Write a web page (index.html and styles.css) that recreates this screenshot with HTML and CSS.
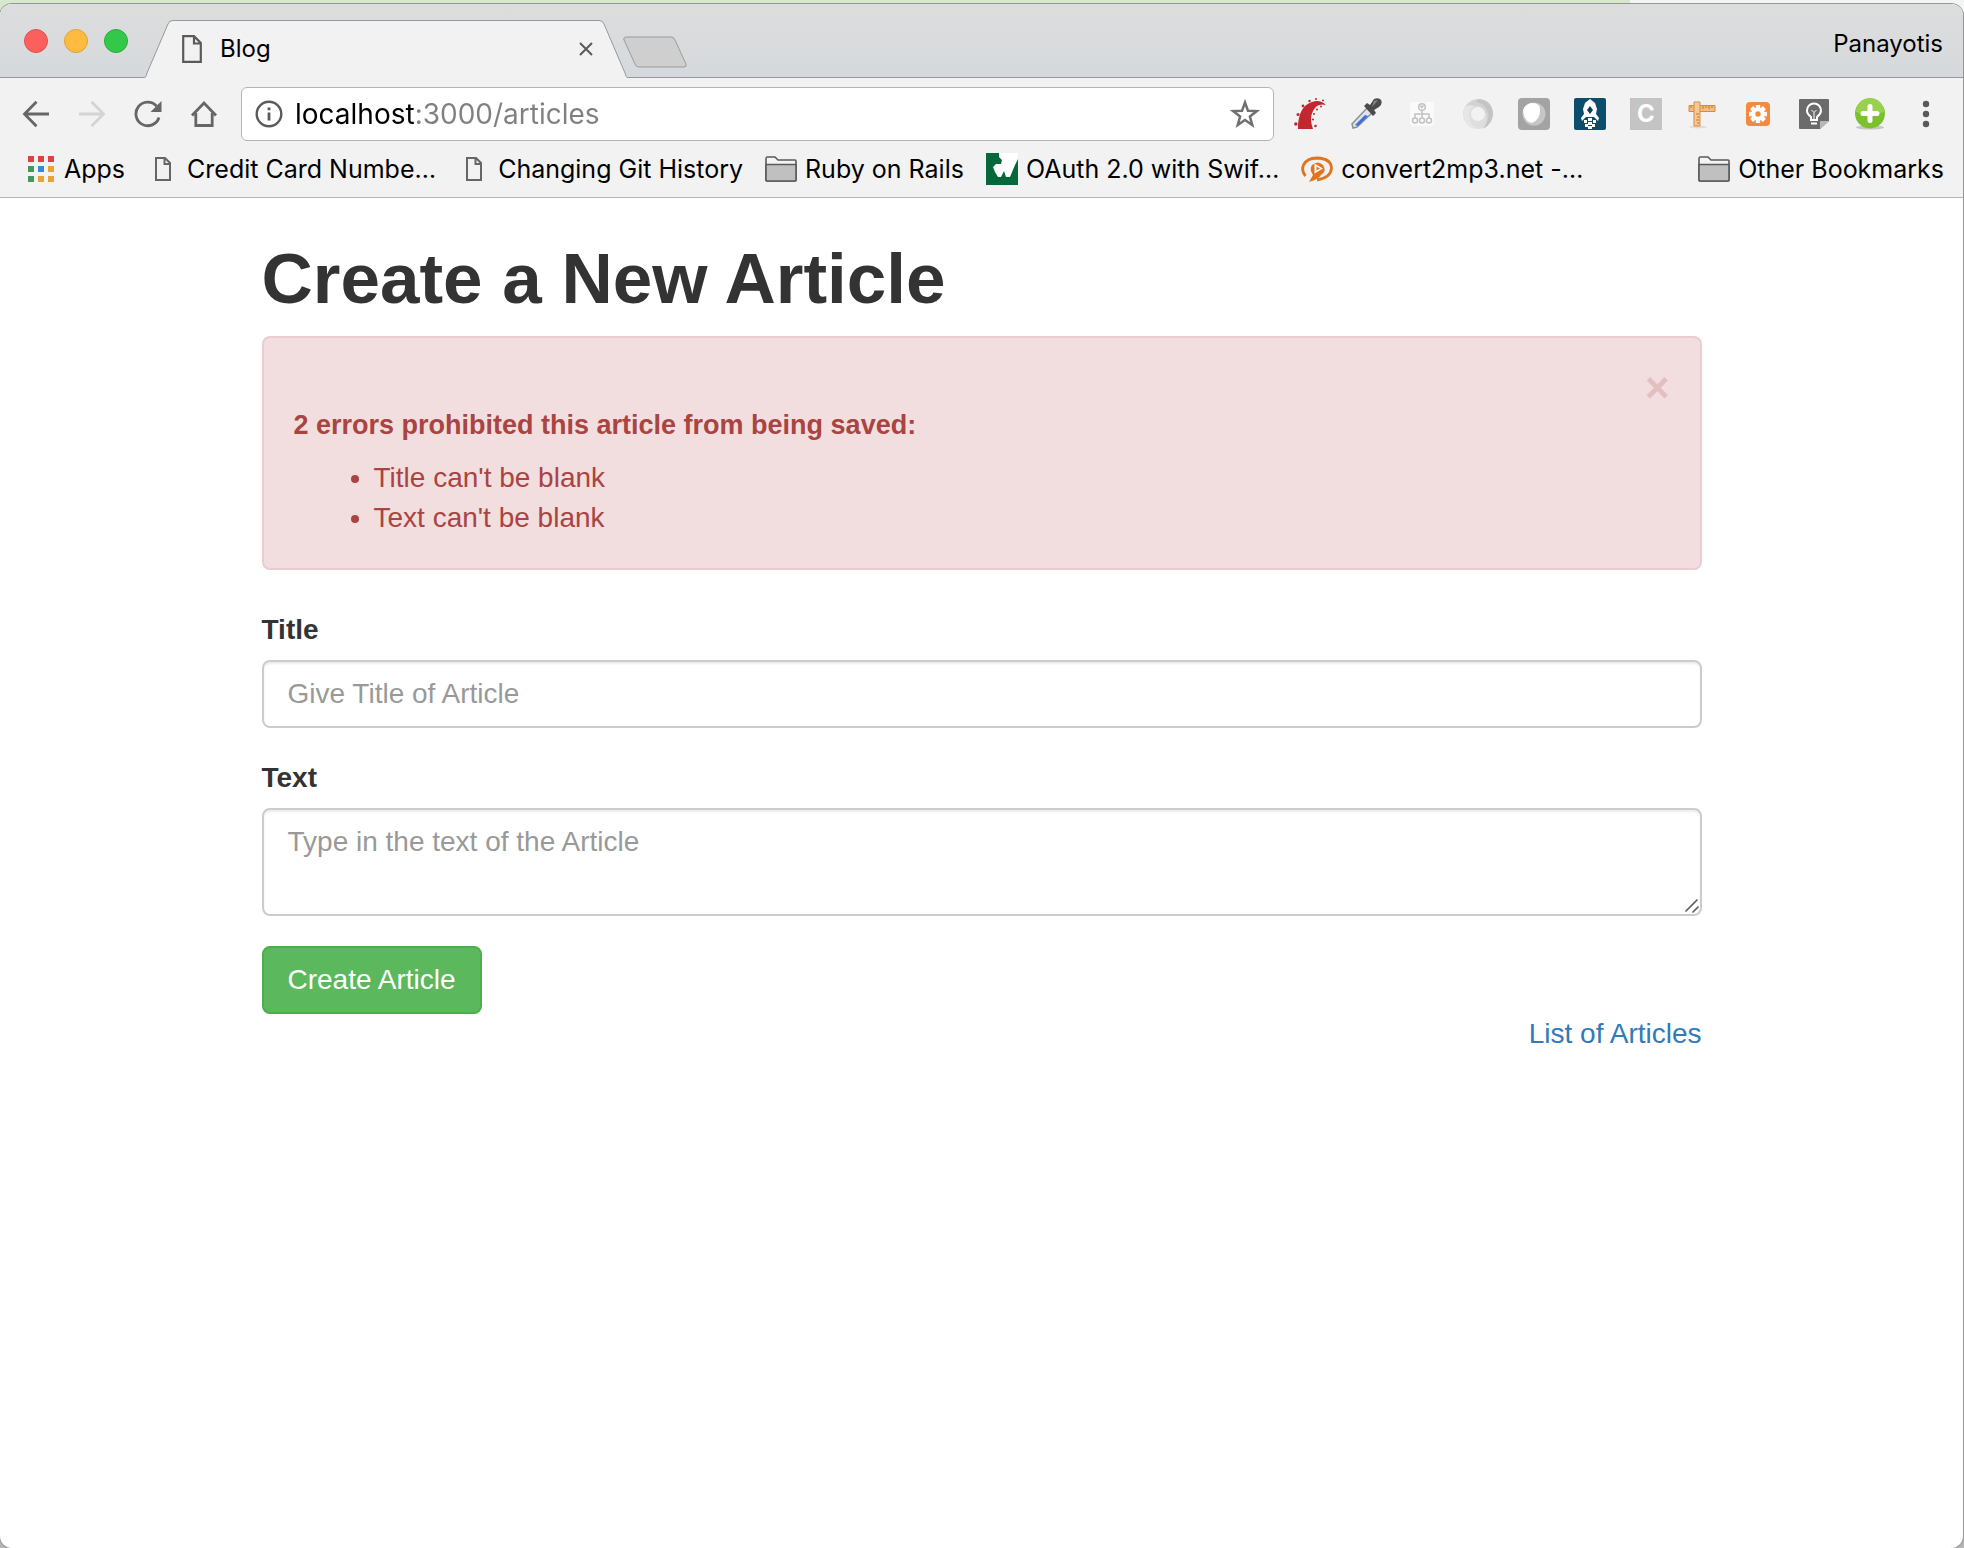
FILE: index.html
```html
<!DOCTYPE html>
<html lang="en">
<head>
<meta charset="utf-8">
<title>Blog</title>
<link rel="stylesheet" href="styles.css">
</head>
<body>
<div class="window">
  <header class="chrome">
    <div class="tabstrip">
      <div class="lights">
        <button class="light light-close" aria-label="Close window"></button>
        <button class="light light-min" aria-label="Minimise window"></button>
        <button class="light light-zoom" aria-label="Zoom window"></button>
      </div>
      <div class="tab">
        <svg class="tab-shape" viewBox="0 0 484 58" preserveAspectRatio="none" aria-hidden="true"><path d="M0 58C2 57 2 56 3 53L24 4Q25 .5 29 .5H455Q459 .5 460 4L481 53C482 56 482 57 484 58" fill="#f2f2f2" stroke="#96989b"/></svg>
        <svg class="tab-icon" viewBox="0 0 20 28" aria-hidden="true"><path d="M1.200 1.200H12L18.800 8V26.800H1.200ZM12 1.200V8.500H18.800" fill="none" stroke="#5a5a5a" stroke-width="2.200"/></svg>
        <span class="tab-title">Blog</span>
        <button class="icon-button" aria-label="Close tab"><svg width="14" height="14" viewBox="0 0 14 14"><path d="M1 1L13 13M13 1L1 13" stroke="#5a5a5a" stroke-width="2"/></svg></button>
      </div>
      <button class="icon-button new-tab" aria-label="New tab"><svg width="66" height="33" viewBox="0 0 66 33"><path d="M5 1H49Q52 1 53 4L64 28Q65 31 62 31H17Q14 31 13 28L2 4Q1 1 5 1Z" fill="#cfcfcf" stroke="#9b9b9b"/></svg></button>
      <button class="icon-button profile">Panayotis</button>
    </div>

    <div class="toolbar">
      <nav class="nav" aria-label="History">
        <button class="icon-button" aria-label="Back"><svg width="28" height="28" viewBox="0 0 28 28"><path d="M27 14H3M14.500 1.800L2.500 14L14.500 26.200" fill="none" stroke="#666" stroke-width="2.800"/></svg></button>
        <button class="icon-button" aria-label="Forward"><svg width="28" height="28" viewBox="0 0 28 28"><path d="M1 14H25M13.500 1.800L25.500 14L13.500 26.200" fill="none" stroke="#d4d4d4" stroke-width="2.800"/></svg></button>
        <button class="icon-button" aria-label="Reload"><svg width="28" height="28" viewBox="0 0 28 28"><path d="M22.500 6A11.800 11.800 0 1 0 25 17.500" fill="none" stroke="#666" stroke-width="2.800"/><path d="M27.500 1V12H16.500Z" fill="#666"/></svg></button>
        <button class="icon-button" aria-label="Home"><svg width="28" height="28" viewBox="0 0 28 28"><path d="M2 15.500L14 3L26 15.500M5.800 13V25.500H22.200V13" fill="none" stroke="#666" stroke-width="2.800"/></svg></button>
      </nav>
      <form class="omnibox">
        <svg width="28" height="28" viewBox="0 0 28 28" aria-hidden="true"><circle cx="14" cy="14" r="12.300" fill="none" stroke="#5a5a5a" stroke-width="2.400"/><path d="M14 12.500V20.500M14 7.500V10.300" stroke="#5a5a5a" stroke-width="2.800"/></svg>
        <input class="url" type="text" aria-label="Address" value="localhost:3000/articles">
        <button class="icon-button" type="button" aria-label="Bookmark this page"><svg width="30" height="30" viewBox="0 0 30 30"><path d="M15 3.500L18 11.800L26.800 12.100L19.900 17.500L22.300 26L15 21L7.700 26L10.100 17.500L3.200 12.100L12 11.800Z" fill="none" stroke="#707070" stroke-width="2.500"/></svg></button>
      </form>
      <div class="extensions">
        <button class="icon-button" aria-label="Rails"><svg width="32" height="32" viewBox="0 0 32 32"><path d="M4 31C4 16 9 4 23 3Q28 3 32 7Q23 5 19 13Q15 20 19 31Z" fill="#c1272d"/><g fill="#c1272d"><circle cx="1.800" cy="26" r="1.700"/><circle cx="4" cy="16.500" r="1.500"/><circle cx="9" cy="8" r="1.400"/><circle cx="15.500" cy="3" r="1.200"/><circle cx="22" cy="1" r="1"/><circle cx="29" cy="2.500" r="1"/><circle cx="27" cy="8.500" r="1"/><circle cx="23" cy="11.500" r="1"/><circle cx="20" cy="16" r="1"/><circle cx="19" cy="21.500" r="1.100"/><circle cx="21.500" cy="28" r="1.300"/></g></svg></button>
        <button class="icon-button" aria-label="Colour picker"><svg width="32" height="32" viewBox="0 0 32 32"><path d="M3 30L2 26L17 10L22 15L7 29Z" fill="#dfe3ea" stroke="#8d9096" stroke-width="1.500"/><path d="M5 27L15 17L18 18L8 28Z" fill="#3d6fe0"/><path d="M14 8L17 5L20 7L24 1Q29-1 31 2Q33 6 29 9L24 12L26 15L23 18Z" fill="#4b4b4b"/><path d="M24 3L28 2L22 9Z" fill="#8a8a8a"/></svg></button>
        <button class="icon-button" aria-label="Site map"><svg width="32" height="32" viewBox="0 0 32 32"><rect x="4" y="4" width="24" height="24" rx="3" fill="#fafafa"/><g fill="none" stroke="#c2c2c2" stroke-width="1.500"><circle cx="16" cy="9" r="3.300"/><path d="M14.500 7.500L16 9.500L17.500 7.500M16 12V20M9 20V16H23V20"/><circle cx="9" cy="22.500" r="2.500"/><circle cx="16" cy="22.500" r="2.500"/><circle cx="23" cy="22.500" r="2.500"/></g></svg></button>
        <button class="icon-button" aria-label="Swirl"><svg width="32" height="32" viewBox="0 0 32 32"><circle cx="16" cy="16" r="11" fill="none" stroke="#dedede" stroke-width="8"/><path d="M15 1Q30 1 31 15Q30 26 21 31Q28 20 22 12Q18 7 10 8Q4 10 1 17Q2 5 15 1Z" fill="#d2d2d2"/><path d="M17 1Q30 3 31 16Q30 26 21 31Q29 21 25 12Q22 5 14 4Z" fill="#c4c4c4"/><path d="M3 9Q-1 18 4 25Q9 31 15 31Q7 26 7 18Q7 11 12 8Q7 6 3 9Z" fill="#e6e6e6"/></svg></button>
        <button class="icon-button" aria-label="Shield"><svg width="32" height="32" viewBox="0 0 32 32"><rect width="32" height="32" rx="4" fill="#a3a3a3"/><circle cx="16" cy="16" r="11.500" fill="#c6c6c6"/><path d="M5 12Q7 6 14 5Q21 5 22 10Q23 21 14 25Q6 24 5 12Z" fill="#fff"/></svg></button>
        <button class="icon-button" aria-label="Rocket"><svg width="32" height="32" viewBox="0 0 32 32"><rect width="32" height="32" rx="2" fill="#0b4d6b"/><path d="M16 1L21 5L23 11L22 16L25 20L24 23L20 19H12L8 23L7 20L10 16L9 11L11 5Z" fill="#fff"/><path d="M16 8L19 12L16 16L13 12Z" fill="#0b3c52"/><path d="M14 20H18V23H14ZM10 22H13V25H10ZM19 22H22V25H19ZM14 24H18V27H14ZM11 26H14V29H11ZM18 26H21V29H18ZM14 28H18V31H14Z" fill="#fff"/></svg></button>
        <button class="icon-button ext-letter" aria-label="Letter C"><b>C</b></button>
        <button class="icon-button" aria-label="Ruler"><svg width="32" height="32" viewBox="0 0 32 32"><ellipse cx="12" cy="29" rx="9" ry="1.500" fill="#dedede"/><path d="M3 7.500H29V13.500H3Z" fill="#f4bd80" stroke="#d58b42"/><path d="M8 4H14V28H8Z" fill="#f8c890" stroke="#d58b42"/><path d="M17 8V11M20 8V10M23 8V11M26 8V10M5 8V10M13 16H10M13 19H11M13 22H10M13 25H11" stroke="#bd7630"/></svg></button>
        <button class="icon-button" aria-label="Settings extension"><svg width="32" height="32" viewBox="0 0 32 32"><rect x="4" y="4" width="24" height="24" rx="4" fill="#f58a3c"/><path d="M16 7V25M7 16H25M9.600 9.600L22.400 22.400M22.400 9.600L9.600 22.400" stroke="#fff" stroke-width="4.400"/><circle cx="16" cy="16" r="6.500" fill="#fff"/><circle cx="16" cy="16" r="2.700" fill="#f58a3c"/></svg></button>
        <button class="icon-button" aria-label="Notes"><svg width="32" height="32" viewBox="0 0 32 32"><path d="M2 1H30Q31 1 31 2V23L22 31H2Q1 31 1 30V2Q1 1 2 1Z" fill="#6b6b6b"/><path d="M22 31V24Q22 23 23 23H31Z" fill="#b8b8b8"/><path d="M13 22V19Q9 16 9 12.500A7 7 0 0 1 23 12.500Q23 16 19 19V22ZM13 25.500H19" fill="none" stroke="#fff" stroke-width="2"/><path d="M13.500 12L16 14.500L18.500 12M16 14.500V21" fill="none" stroke="#fff" stroke-width="1"/></svg></button>
        <button class="icon-button" aria-label="Add"><svg width="32" height="32" viewBox="0 0 32 32"><ellipse cx="16" cy="29.500" rx="14" ry="2" fill="#c4c8c0"/><circle cx="16" cy="15.500" r="15" fill="#7cc02c"/><path d="M2 14A14 14 0 0 1 30 14Q16 19 2 14Z" fill="#98d24c"/><path d="M16 8.500V22.500M9 15.500H23" stroke="#fff" stroke-width="5" stroke-linecap="round"/></svg></button>
        <button class="icon-button" aria-label="Menu"><svg width="32" height="32" viewBox="0 0 32 32"><g fill="#5a5a5a"><circle cx="16" cy="6" r="3.200"/><circle cx="16" cy="16" r="3.200"/><circle cx="16" cy="26" r="3.200"/></g></svg></button>
      </div>
    </div>

    <nav class="bookmarks" aria-label="Bookmarks">
      <a class="bookmark" href="#"><svg width="32" height="32" viewBox="0 0 32 32"><path d="M4 3H10V9H4ZM14 3H20V9H14ZM24 3H30V9H24Z" fill="#dd4343"/><path d="M4 13H10V19H4ZM4 23H10V29H4Z" fill="#43985a"/><path d="M14 13H20V19H14Z" fill="#3a87e0"/><path d="M24 13H30V19H24ZM14 23H20V29H14ZM24 23H30V29H24Z" fill="#e8a33b"/></svg>Apps</a>
      <a class="bookmark" href="#"><svg width="32" height="32" viewBox="0 0 32 32"><path d="M9 5H18L23 10V27H9ZM17.500 5V11H23" fill="none" stroke="#666" stroke-width="2"/></svg>Credit Card Numbe…</a>
      <a class="bookmark" href="#"><svg width="32" height="32" viewBox="0 0 32 32"><path d="M9 5H18L23 10V27H9ZM17.500 5V11H23" fill="none" stroke="#666" stroke-width="2"/></svg>Changing Git History</a>
      <a class="bookmark" href="#"><svg width="32" height="32" viewBox="0 0 32 32"><path d="M1 6Q1 4 2 4H10L13 7H30Q31 7 31 8V27Q31 28 30 28H2Q1 28 1 27Z" fill="#f4f4f4" stroke="#5a5a5a" stroke-width="1.600"/><path d="M1 11.500H31V27Q31 28 30 28H2Q1 28 1 27Z" fill="#c0c0c0" stroke="#5a5a5a" stroke-width="1.600"/></svg>Ruby on Rails</a>
      <a class="bookmark" href="#"><svg width="32" height="32" viewBox="0 0 32 32"><rect width="32" height="32" fill="#04683a"/><path d="M13 0H32V6L29 12L24 24H20L18 18L15 24H12L9 19L7 14L10 11L15 11L16 7L13 4Z" fill="#fff"/></svg>OAuth 2.0 with Swif…</a>
      <a class="bookmark" href="#"><svg width="32" height="32" viewBox="0 0 32 32"><path d="M4.500 23Q0 18 2.500 12Q6 5 16 5Q30 5.500 30.500 15Q30 24.500 16 27" fill="none" stroke="#e0741f" stroke-width="2.800"/><path d="M8 29L12 22Q8 16 11 12Q17 7 22 12Q26 18 20 22Q18 26 8 29Z" fill="#e0741f"/><path d="M13.500 10.500L22 15.500L13.500 20.500Z" fill="#fff"/><path d="M15.500 13.500L19 15.500L15.500 17.500Z" fill="#e0741f"/></svg>convert2mp3.net -…</a>
      <a class="bookmark bookmark-other" href="#"><svg width="32" height="32" viewBox="0 0 32 32"><path d="M1 6Q1 4 2 4H10L13 7H30Q31 7 31 8V27Q31 28 30 28H2Q1 28 1 27Z" fill="#f4f4f4" stroke="#5a5a5a" stroke-width="1.600"/><path d="M1 11.500H31V27Q31 28 30 28H2Q1 28 1 27Z" fill="#c0c0c0" stroke="#5a5a5a" stroke-width="1.600"/></svg>Other Bookmarks</a>
    </nav>
  </header>

  <main class="page">
    <h1 class="page-title">Create a New Article</h1>
    <section class="alert" role="alert">
      <button class="alert-close" aria-label="Dismiss">×</button>
      <h2 class="alert-title">2 errors prohibited this article from being saved:</h2>
      <ul class="alert-list">
        <li>Title can't be blank</li>
        <li>Text can't be blank</li>
      </ul>
    </section>
    <form>
      <div class="form-group">
        <label for="article_title">Title</label>
        <input class="form-control" id="article_title" type="text" placeholder="Give Title of Article">
      </div>
      <div class="form-group">
        <label for="article_text">Text</label>
        <div class="textarea-box">
          <textarea class="form-control" id="article_text" rows="2" placeholder="Type in the text of the Article"></textarea>
          <svg class="grip" width="16" height="16" viewBox="0 0 16 16" aria-hidden="true"><path d="M2 13L13 2M9 14L14 9" stroke="#5c5c5c" stroke-width="1.700" stroke-linecap="round"/></svg>
        </div>
      </div>
      <button class="btn" type="button">Create Article</button>
    </form>
    <a class="list-link" href="#">List of Articles</a>
  </main>
</div>
</body>
</html>
```
FILE: styles.css
```css
* {
  box-sizing: border-box;
}

body {
  margin: 0;
  min-height: 100vh;
  display: flex;
  padding: 4px 1px 0 0;
  background:
    linear-gradient(to right, #d7e8cd 83%, #f4f4f4 83%) top / 100% 12px no-repeat,
    #b5b5b5;
  color: #333;
  font: 28px/40px "Liberation Sans", Arial, sans-serif;
}

button,
input,
textarea {
  margin: 0;
  font: inherit;
  color: inherit;
}

svg {
  display: block;
  flex: none;
}

a {
  text-decoration: none;
}

.window {
  flex: 1;
  min-width: 0;
  border-radius: 12px;
  overflow: hidden;
  background: #fff;
  box-shadow: 0 0 0 1px #969696;
}

/* Browser chrome */

.chrome {
  background: #f2f2f2;
  border-bottom: 1px solid #b6b6b6;
  color: #000;
  font-family: Inter, Roboto, sans-serif;
  font-size: 24px;
  line-height: 32px;
}

.icon-button {
  display: flex;
  flex: none;
  padding: 0;
  border: 0;
  background: none;
}

.tabstrip {
  display: flex;
  align-items: flex-end;
  height: 74px;
  padding: 0 20px 0 24px;
  border-bottom: 1px solid #96989b;
  background: linear-gradient(#dcdddd, #d6d9dc);
}

.lights {
  display: flex;
  gap: 16px;
  align-self: center;
  margin-right: 16px;
}

.light {
  width: 24px;
  height: 24px;
  padding: 0;
  border: 1px solid;
  border-radius: 50%;
}

.light-close {
  background: #fc605c;
  border-color: #e2504c;
}

.light-min {
  background: #fdbc40;
  border-color: #e0a236;
}

.light-zoom {
  background: #34c84a;
  border-color: #28ac3a;
}

.tab {
  position: relative;
  display: flex;
  align-items: center;
  width: 484px;
  height: 58px;
  margin-bottom: -1px;
  padding: 0 35px 0 38px;
}

.tab > * {
  position: relative;
}

.tab > .tab-shape {
  position: absolute;
  inset: 0;
  width: 100%;
  height: 100%;
}

.tab-icon {
  width: 20px;
  height: 28px;
}

.tab-title {
  flex: 1;
  margin-left: 18px;
}

.new-tab {
  margin: 0 auto 8px -6px;
}

.profile {
  align-self: center;
  padding-top: 6px;
}

.toolbar {
  display: flex;
  align-items: center;
  gap: 20px;
  padding: 9px 21px 0 22px;
}

.nav {
  display: flex;
  gap: 28px;
  margin-right: 3px;
}

.omnibox {
  display: flex;
  align-items: center;
  flex: 1;
  min-width: 0;
  height: 54px;
  gap: 12px;
  padding: 0 13px;
  border: 1px solid #b4b4b4;
  border-radius: 6px;
  background: #fff;
}

.url {
  flex: 1;
  min-width: 0;
  padding: 0;
  border: 0;
  outline: 0;
  font-size: 28px;
  color: transparent;
  background: linear-gradient(to right, #000 121px, #808080 121px);
  -webkit-background-clip: text;
  background-clip: text;
}

.extensions {
  display: flex;
  gap: 24px;
}

.ext-letter {
  justify-content: center;
  width: 32px;
  height: 32px;
  background: #c4c4c4;
  color: #fff;
}

.bookmarks {
  display: flex;
  align-items: center;
  gap: 22px;
  padding: 12px 19px 12px 24px;
  font-size: 25px;
}

.bookmark {
  display: flex;
  align-items: center;
  gap: 8px;
  color: #000;
  white-space: nowrap;
}

.bookmark-other {
  margin-left: auto;
}

/* Blog page */

.page {
  display: flex;
  flex-direction: column;
  max-width: 1440px;
  margin: 0 auto;
  padding: 40px 0;
}

.page-title {
  margin: 0 0 17px;
  font-size: 71px;
  line-height: 81px;
}

.alert {
  display: flex;
  flex-direction: column;
  margin-bottom: 40px;
  padding: 30px;
  border: 2px solid #ebccd1;
  border-radius: 8px;
  background: #f2dede;
  color: #a94442;
}

.alert-close {
  align-self: flex-end;
  height: 40px;
  padding: 0;
  border: 0;
  background: none;
  color: #e3bfbf;
  font-size: 42px;
  font-weight: bold;
}

.alert-title {
  margin: 0 0 16px;
  font-size: 27px;
  line-height: 34px;
}

.alert-list {
  margin: 0;
  padding-left: 80px;
}

.form-group {
  margin-bottom: 30px;
}

.form-group label {
  display: block;
  margin-bottom: 10px;
  font-weight: bold;
}

.form-control {
  display: block;
  width: 100%;
  padding: 12px 24px;
  border: 2px solid #ccc;
  border-radius: 8px;
  background: #fff;
  box-shadow: inset 0 2px 2px rgba(0, 0, 0, 0.075);
  resize: none;
}

.form-control::placeholder {
  color: #999;
}

.textarea-box {
  position: relative;
}

.grip {
  position: absolute;
  right: 2px;
  bottom: 2px;
}

.btn {
  display: block;
  padding: 12px 24px;
  border: 2px solid #4cae4c;
  border-radius: 8px;
  background: #5cb85c;
  color: #fff;
}

.list-link {
  align-self: flex-end;
  color: #337ab7;
}
```
